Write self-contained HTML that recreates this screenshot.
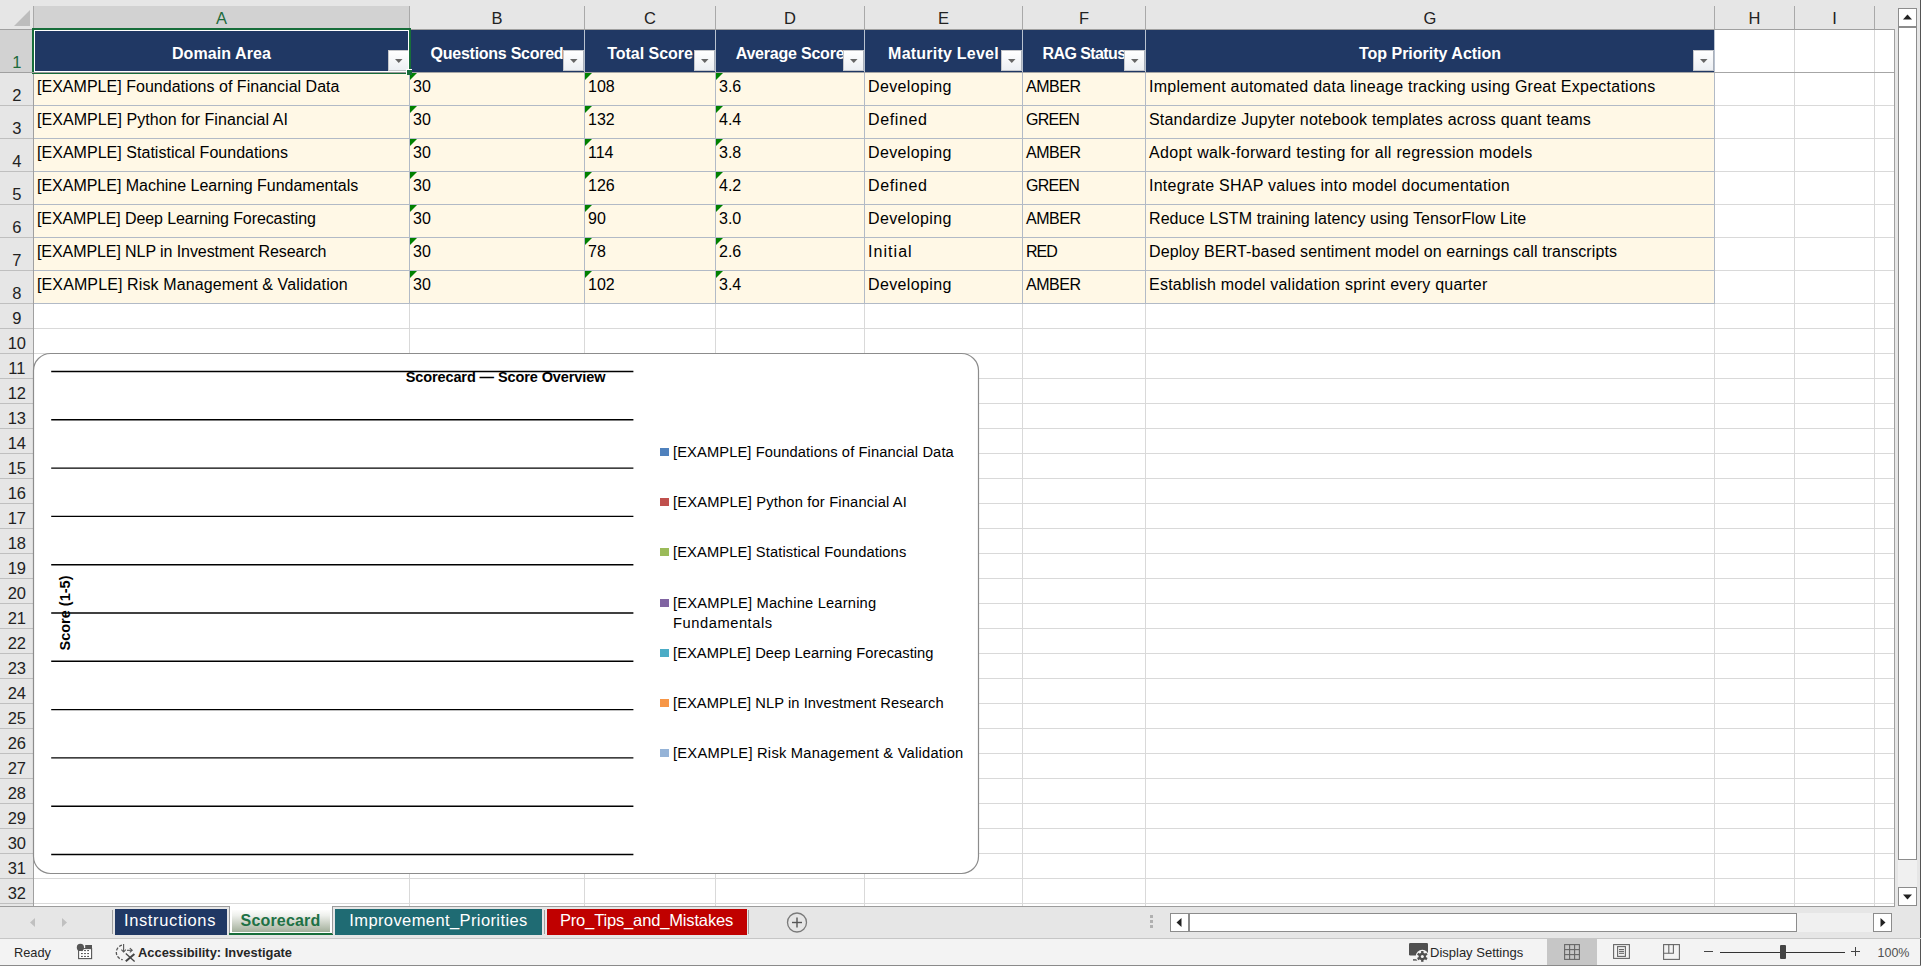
<!DOCTYPE html>
<html><head><meta charset="utf-8"><style>
html,body{margin:0;padding:0;}
body{width:1921px;height:966px;overflow:hidden;position:relative;font-family:"Liberation Sans", sans-serif;}
body div{position:absolute;box-sizing:border-box;}
.t{white-space:pre;line-height:1;}
.dd{width:21px;height:21px;background:linear-gradient(#ffffff,#eceff3);border:1px solid #c4c6ca;border-right-color:#a9afb9;box-sizing:border-box;}
</style></head><body>
<div style="left:0;top:0;width:1921px;height:966px;background:#e6e6e6"></div>
<div style="left:34px;top:30px;width:1860px;height:876px;background:#fff;"></div>
<div style="left:409px;top:30px;width:1px;height:876px;background:#d9d9d9;"></div>
<div style="left:584px;top:30px;width:1px;height:876px;background:#d9d9d9;"></div>
<div style="left:715px;top:30px;width:1px;height:876px;background:#d9d9d9;"></div>
<div style="left:864px;top:30px;width:1px;height:876px;background:#d9d9d9;"></div>
<div style="left:1022px;top:30px;width:1px;height:876px;background:#d9d9d9;"></div>
<div style="left:1145px;top:30px;width:1px;height:876px;background:#d9d9d9;"></div>
<div style="left:1714px;top:30px;width:1px;height:876px;background:#d9d9d9;"></div>
<div style="left:1794px;top:30px;width:1px;height:876px;background:#d9d9d9;"></div>
<div style="left:1874px;top:30px;width:1px;height:876px;background:#d9d9d9;"></div>
<div style="left:34px;top:105px;width:1860px;height:1px;background:#d9d9d9;"></div>
<div style="left:34px;top:138px;width:1860px;height:1px;background:#d9d9d9;"></div>
<div style="left:34px;top:171px;width:1860px;height:1px;background:#d9d9d9;"></div>
<div style="left:34px;top:204px;width:1860px;height:1px;background:#d9d9d9;"></div>
<div style="left:34px;top:237px;width:1860px;height:1px;background:#d9d9d9;"></div>
<div style="left:34px;top:270px;width:1860px;height:1px;background:#d9d9d9;"></div>
<div style="left:34px;top:303px;width:1860px;height:1px;background:#d9d9d9;"></div>
<div style="left:34px;top:328px;width:1860px;height:1px;background:#d9d9d9;"></div>
<div style="left:34px;top:353px;width:1860px;height:1px;background:#d9d9d9;"></div>
<div style="left:34px;top:378px;width:1860px;height:1px;background:#d9d9d9;"></div>
<div style="left:34px;top:403px;width:1860px;height:1px;background:#d9d9d9;"></div>
<div style="left:34px;top:428px;width:1860px;height:1px;background:#d9d9d9;"></div>
<div style="left:34px;top:453px;width:1860px;height:1px;background:#d9d9d9;"></div>
<div style="left:34px;top:478px;width:1860px;height:1px;background:#d9d9d9;"></div>
<div style="left:34px;top:503px;width:1860px;height:1px;background:#d9d9d9;"></div>
<div style="left:34px;top:528px;width:1860px;height:1px;background:#d9d9d9;"></div>
<div style="left:34px;top:553px;width:1860px;height:1px;background:#d9d9d9;"></div>
<div style="left:34px;top:578px;width:1860px;height:1px;background:#d9d9d9;"></div>
<div style="left:34px;top:603px;width:1860px;height:1px;background:#d9d9d9;"></div>
<div style="left:34px;top:628px;width:1860px;height:1px;background:#d9d9d9;"></div>
<div style="left:34px;top:653px;width:1860px;height:1px;background:#d9d9d9;"></div>
<div style="left:34px;top:678px;width:1860px;height:1px;background:#d9d9d9;"></div>
<div style="left:34px;top:703px;width:1860px;height:1px;background:#d9d9d9;"></div>
<div style="left:34px;top:728px;width:1860px;height:1px;background:#d9d9d9;"></div>
<div style="left:34px;top:753px;width:1860px;height:1px;background:#d9d9d9;"></div>
<div style="left:34px;top:778px;width:1860px;height:1px;background:#d9d9d9;"></div>
<div style="left:34px;top:803px;width:1860px;height:1px;background:#d9d9d9;"></div>
<div style="left:34px;top:828px;width:1860px;height:1px;background:#d9d9d9;"></div>
<div style="left:34px;top:853px;width:1860px;height:1px;background:#d9d9d9;"></div>
<div style="left:34px;top:878px;width:1860px;height:1px;background:#d9d9d9;"></div>
<div style="left:34px;top:903px;width:1860px;height:1px;background:#d9d9d9;"></div>
<div style="left:34px;top:73px;width:1680px;height:230px;background:#fff8e6;"></div>
<div style="left:409px;top:72px;width:1px;height:232px;background:#b2bac6;"></div>
<div style="left:584px;top:72px;width:1px;height:232px;background:#b2bac6;"></div>
<div style="left:715px;top:72px;width:1px;height:232px;background:#b2bac6;"></div>
<div style="left:864px;top:72px;width:1px;height:232px;background:#b2bac6;"></div>
<div style="left:1022px;top:72px;width:1px;height:232px;background:#b2bac6;"></div>
<div style="left:1145px;top:72px;width:1px;height:232px;background:#b2bac6;"></div>
<div style="left:1714px;top:72px;width:1px;height:232px;background:#b2bac6;"></div>
<div style="left:34px;top:105px;width:1681px;height:1px;background:#b2bac6;"></div>
<div style="left:34px;top:138px;width:1681px;height:1px;background:#b2bac6;"></div>
<div style="left:34px;top:171px;width:1681px;height:1px;background:#b2bac6;"></div>
<div style="left:34px;top:204px;width:1681px;height:1px;background:#b2bac6;"></div>
<div style="left:34px;top:237px;width:1681px;height:1px;background:#b2bac6;"></div>
<div style="left:34px;top:270px;width:1681px;height:1px;background:#b2bac6;"></div>
<div style="left:34px;top:303px;width:1681px;height:1px;background:#b2bac6;"></div>
<div style="left:34px;top:30px;width:1680px;height:42px;background:#203864;"></div>
<div style="left:409px;top:30px;width:1px;height:42px;background:#b9c2cf;"></div>
<div style="left:584px;top:30px;width:1px;height:42px;background:#b9c2cf;"></div>
<div style="left:715px;top:30px;width:1px;height:42px;background:#b9c2cf;"></div>
<div style="left:864px;top:30px;width:1px;height:42px;background:#b9c2cf;"></div>
<div style="left:1022px;top:30px;width:1px;height:42px;background:#b9c2cf;"></div>
<div style="left:1145px;top:30px;width:1px;height:42px;background:#b9c2cf;"></div>
<div style="left:1714px;top:30px;width:1px;height:42px;background:#b9c2cf;"></div>
<div style="left:34px;top:72px;width:1860px;height:1px;background:#a6a6a6;"></div>
<div style="left:34px;top:6px;width:375px;height:23px;background:#d2d2d2;"></div>
<div style="left:409px;top:6px;width:1px;height:23px;background:#a9a9a9;"></div>
<div style="left:584px;top:6px;width:1px;height:23px;background:#a9a9a9;"></div>
<div style="left:715px;top:6px;width:1px;height:23px;background:#a9a9a9;"></div>
<div style="left:864px;top:6px;width:1px;height:23px;background:#a9a9a9;"></div>
<div style="left:1022px;top:6px;width:1px;height:23px;background:#a9a9a9;"></div>
<div style="left:1145px;top:6px;width:1px;height:23px;background:#a9a9a9;"></div>
<div style="left:1714px;top:6px;width:1px;height:23px;background:#a9a9a9;"></div>
<div style="left:1794px;top:6px;width:1px;height:23px;background:#a9a9a9;"></div>
<div style="left:1874px;top:6px;width:1px;height:23px;background:#a9a9a9;"></div>
<div style="left:33px;top:6px;width:1px;height:23px;background:#a9a9a9;"></div>
<div style="left:0px;top:29px;width:1895px;height:1px;background:#a0a0a0;"></div>
<div class="t" style="top:10.03px;font-size:16.5px;color:#1e6b3c;left:-778.5px;width:2000px;text-align:center;">A</div>
<div class="t" style="top:10.03px;font-size:16.5px;color:#222;left:-503.0px;width:2000px;text-align:center;">B</div>
<div class="t" style="top:10.03px;font-size:16.5px;color:#222;left:-350.0px;width:2000px;text-align:center;">C</div>
<div class="t" style="top:10.03px;font-size:16.5px;color:#222;left:-210.0px;width:2000px;text-align:center;">D</div>
<div class="t" style="top:10.03px;font-size:16.5px;color:#222;left:-56.5px;width:2000px;text-align:center;">E</div>
<div class="t" style="top:10.03px;font-size:16.5px;color:#222;left:84.0px;width:2000px;text-align:center;">F</div>
<div class="t" style="top:10.03px;font-size:16.5px;color:#222;left:430.0px;width:2000px;text-align:center;">G</div>
<div class="t" style="top:10.03px;font-size:16.5px;color:#222;left:754.5px;width:2000px;text-align:center;">H</div>
<div class="t" style="top:10.03px;font-size:16.5px;color:#222;left:834.5px;width:2000px;text-align:center;">I</div>
<svg style="position:absolute;left:0;top:0" width="34" height="30"><polygon points="30,10 30,26 14,26" fill="#bdbdbd"/></svg>
<div style="left:0px;top:30px;width:33px;height:876px;background:#e6e6e6;"></div>
<div style="left:0px;top:30px;width:33px;height:42px;background:#d2d2d2;"></div>
<div style="left:33px;top:29px;width:1px;height:878px;background:#a0a0a0;"></div>
<div style="left:0px;top:72px;width:33px;height:1px;background:#bfbfbf;"></div>
<div style="left:0px;top:105px;width:33px;height:1px;background:#bfbfbf;"></div>
<div style="left:0px;top:138px;width:33px;height:1px;background:#bfbfbf;"></div>
<div style="left:0px;top:171px;width:33px;height:1px;background:#bfbfbf;"></div>
<div style="left:0px;top:204px;width:33px;height:1px;background:#bfbfbf;"></div>
<div style="left:0px;top:237px;width:33px;height:1px;background:#bfbfbf;"></div>
<div style="left:0px;top:270px;width:33px;height:1px;background:#bfbfbf;"></div>
<div style="left:0px;top:303px;width:33px;height:1px;background:#bfbfbf;"></div>
<div style="left:0px;top:328px;width:33px;height:1px;background:#bfbfbf;"></div>
<div style="left:0px;top:353px;width:33px;height:1px;background:#bfbfbf;"></div>
<div style="left:0px;top:378px;width:33px;height:1px;background:#bfbfbf;"></div>
<div style="left:0px;top:403px;width:33px;height:1px;background:#bfbfbf;"></div>
<div style="left:0px;top:428px;width:33px;height:1px;background:#bfbfbf;"></div>
<div style="left:0px;top:453px;width:33px;height:1px;background:#bfbfbf;"></div>
<div style="left:0px;top:478px;width:33px;height:1px;background:#bfbfbf;"></div>
<div style="left:0px;top:503px;width:33px;height:1px;background:#bfbfbf;"></div>
<div style="left:0px;top:528px;width:33px;height:1px;background:#bfbfbf;"></div>
<div style="left:0px;top:553px;width:33px;height:1px;background:#bfbfbf;"></div>
<div style="left:0px;top:578px;width:33px;height:1px;background:#bfbfbf;"></div>
<div style="left:0px;top:603px;width:33px;height:1px;background:#bfbfbf;"></div>
<div style="left:0px;top:628px;width:33px;height:1px;background:#bfbfbf;"></div>
<div style="left:0px;top:653px;width:33px;height:1px;background:#bfbfbf;"></div>
<div style="left:0px;top:678px;width:33px;height:1px;background:#bfbfbf;"></div>
<div style="left:0px;top:703px;width:33px;height:1px;background:#bfbfbf;"></div>
<div style="left:0px;top:728px;width:33px;height:1px;background:#bfbfbf;"></div>
<div style="left:0px;top:753px;width:33px;height:1px;background:#bfbfbf;"></div>
<div style="left:0px;top:778px;width:33px;height:1px;background:#bfbfbf;"></div>
<div style="left:0px;top:803px;width:33px;height:1px;background:#bfbfbf;"></div>
<div style="left:0px;top:828px;width:33px;height:1px;background:#bfbfbf;"></div>
<div style="left:0px;top:853px;width:33px;height:1px;background:#bfbfbf;"></div>
<div style="left:0px;top:878px;width:33px;height:1px;background:#bfbfbf;"></div>
<div style="left:0px;top:903px;width:33px;height:1px;background:#bfbfbf;"></div>
<div style="left:0px;top:906px;width:1895px;height:1px;background:#9c9c9c;"></div>
<div class="t" style="top:53.53px;font-size:16.5px;color:#1e6b3c;left:-983.2px;width:2000px;text-align:center;">1</div>
<div class="t" style="top:86.53px;font-size:16.5px;color:#222;left:-983.2px;width:2000px;text-align:center;">2</div>
<div class="t" style="top:119.53px;font-size:16.5px;color:#222;left:-983.2px;width:2000px;text-align:center;">3</div>
<div class="t" style="top:152.53px;font-size:16.5px;color:#222;left:-983.2px;width:2000px;text-align:center;">4</div>
<div class="t" style="top:185.53px;font-size:16.5px;color:#222;left:-983.2px;width:2000px;text-align:center;">5</div>
<div class="t" style="top:218.53px;font-size:16.5px;color:#222;left:-983.2px;width:2000px;text-align:center;">6</div>
<div class="t" style="top:251.53px;font-size:16.5px;color:#222;left:-983.2px;width:2000px;text-align:center;">7</div>
<div class="t" style="top:284.53px;font-size:16.5px;color:#222;left:-983.2px;width:2000px;text-align:center;">8</div>
<div class="t" style="top:309.53px;font-size:16.5px;color:#222;left:-983.2px;width:2000px;text-align:center;">9</div>
<div class="t" style="top:334.53px;font-size:16.5px;color:#222;left:-983.2px;width:2000px;text-align:center;">10</div>
<div class="t" style="top:359.53px;font-size:16.5px;color:#222;left:-983.2px;width:2000px;text-align:center;">11</div>
<div class="t" style="top:384.53px;font-size:16.5px;color:#222;left:-983.2px;width:2000px;text-align:center;">12</div>
<div class="t" style="top:409.53px;font-size:16.5px;color:#222;left:-983.2px;width:2000px;text-align:center;">13</div>
<div class="t" style="top:434.53px;font-size:16.5px;color:#222;left:-983.2px;width:2000px;text-align:center;">14</div>
<div class="t" style="top:459.53px;font-size:16.5px;color:#222;left:-983.2px;width:2000px;text-align:center;">15</div>
<div class="t" style="top:484.53px;font-size:16.5px;color:#222;left:-983.2px;width:2000px;text-align:center;">16</div>
<div class="t" style="top:509.53px;font-size:16.5px;color:#222;left:-983.2px;width:2000px;text-align:center;">17</div>
<div class="t" style="top:534.53px;font-size:16.5px;color:#222;left:-983.2px;width:2000px;text-align:center;">18</div>
<div class="t" style="top:559.53px;font-size:16.5px;color:#222;left:-983.2px;width:2000px;text-align:center;">19</div>
<div class="t" style="top:584.53px;font-size:16.5px;color:#222;left:-983.2px;width:2000px;text-align:center;">20</div>
<div class="t" style="top:609.53px;font-size:16.5px;color:#222;left:-983.2px;width:2000px;text-align:center;">21</div>
<div class="t" style="top:634.53px;font-size:16.5px;color:#222;left:-983.2px;width:2000px;text-align:center;">22</div>
<div class="t" style="top:659.53px;font-size:16.5px;color:#222;left:-983.2px;width:2000px;text-align:center;">23</div>
<div class="t" style="top:684.53px;font-size:16.5px;color:#222;left:-983.2px;width:2000px;text-align:center;">24</div>
<div class="t" style="top:709.53px;font-size:16.5px;color:#222;left:-983.2px;width:2000px;text-align:center;">25</div>
<div class="t" style="top:734.53px;font-size:16.5px;color:#222;left:-983.2px;width:2000px;text-align:center;">26</div>
<div class="t" style="top:759.53px;font-size:16.5px;color:#222;left:-983.2px;width:2000px;text-align:center;">27</div>
<div class="t" style="top:784.53px;font-size:16.5px;color:#222;left:-983.2px;width:2000px;text-align:center;">28</div>
<div class="t" style="top:809.53px;font-size:16.5px;color:#222;left:-983.2px;width:2000px;text-align:center;">29</div>
<div class="t" style="top:834.53px;font-size:16.5px;color:#222;left:-983.2px;width:2000px;text-align:center;">30</div>
<div class="t" style="top:859.53px;font-size:16.5px;color:#222;left:-983.2px;width:2000px;text-align:center;">31</div>
<div class="t" style="top:884.53px;font-size:16.5px;color:#222;left:-983.2px;width:2000px;text-align:center;">32</div>
<div style="left:1894px;top:29px;width:1px;height:878px;background:#a0a0a0;"></div>
<div class="t" style="top:45.96px;font-size:16px;color:#fff;font-weight:bold;letter-spacing:0.09px;left:-778.5px;width:2000px;text-align:center;">Domain Area</div>
<div class="t" style="top:45.96px;font-size:16px;color:#fff;font-weight:bold;letter-spacing:-0.26px;left:-503.0px;width:2000px;text-align:center;">Questions Scored</div>
<div class="t" style="top:45.96px;font-size:16px;color:#fff;font-weight:bold;letter-spacing:-0.03px;left:-350.0px;width:2000px;text-align:center;">Total Score</div>
<div class="t" style="top:45.96px;font-size:16px;color:#fff;font-weight:bold;letter-spacing:-0.21px;left:-210.0px;width:2000px;text-align:center;">Average Score</div>
<div class="t" style="top:45.96px;font-size:16px;color:#fff;font-weight:bold;letter-spacing:0.23px;left:-56.5px;width:2000px;text-align:center;">Maturity Level</div>
<div class="t" style="top:45.96px;font-size:16px;color:#fff;font-weight:bold;letter-spacing:-0.59px;left:84.0px;width:2000px;text-align:center;">RAG Status</div>
<div class="t" style="top:45.96px;font-size:16px;color:#fff;font-weight:bold;letter-spacing:0px;left:430.0px;width:2000px;text-align:center;">Top Priority Action</div>
<div class="dd" style="left:388px;top:50px"><svg width="21" height="21" style="position:absolute;left:-1px;top:-1px"><polygon points="7,9 14.5,9 10.75,13" fill="#666"/></svg></div>
<div class="dd" style="left:563px;top:50px"><svg width="21" height="21" style="position:absolute;left:-1px;top:-1px"><polygon points="7,9 14.5,9 10.75,13" fill="#666"/></svg></div>
<div class="dd" style="left:694px;top:50px"><svg width="21" height="21" style="position:absolute;left:-1px;top:-1px"><polygon points="7,9 14.5,9 10.75,13" fill="#666"/></svg></div>
<div class="dd" style="left:843px;top:50px"><svg width="21" height="21" style="position:absolute;left:-1px;top:-1px"><polygon points="7,9 14.5,9 10.75,13" fill="#666"/></svg></div>
<div class="dd" style="left:1001px;top:50px"><svg width="21" height="21" style="position:absolute;left:-1px;top:-1px"><polygon points="7,9 14.5,9 10.75,13" fill="#666"/></svg></div>
<div class="dd" style="left:1124px;top:50px"><svg width="21" height="21" style="position:absolute;left:-1px;top:-1px"><polygon points="7,9 14.5,9 10.75,13" fill="#666"/></svg></div>
<div class="dd" style="left:1693px;top:50px"><svg width="21" height="21" style="position:absolute;left:-1px;top:-1px"><polygon points="7,9 14.5,9 10.75,13" fill="#666"/></svg></div>
<div class="t" style="top:79.46px;font-size:16px;color:#000;letter-spacing:0.026px;left:37px;">[EXAMPLE] Foundations of Financial Data</div>
<div class="t" style="top:79.46px;font-size:16px;color:#000;left:413px;">30</div>
<div class="t" style="top:79.46px;font-size:16px;color:#000;left:588px;">108</div>
<div class="t" style="top:79.46px;font-size:16px;color:#000;left:719px;">3.6</div>
<div class="t" style="top:79.46px;font-size:16px;color:#000;letter-spacing:0.367px;left:868px;">Developing</div>
<div class="t" style="top:79.46px;font-size:16px;color:#000;letter-spacing:-0.475px;left:1026px;">AMBER</div>
<div class="t" style="top:79.46px;font-size:16px;color:#000;letter-spacing:0.248px;left:1149px;">Implement automated data lineage tracking using Great Expectations</div>
<svg style="position:absolute;left:410px;top:73px" width="8" height="8"><polygon points="0,0 7,0 0,7" fill="#008000"/></svg>
<svg style="position:absolute;left:585px;top:73px" width="8" height="8"><polygon points="0,0 7,0 0,7" fill="#008000"/></svg>
<svg style="position:absolute;left:716px;top:73px" width="8" height="8"><polygon points="0,0 7,0 0,7" fill="#008000"/></svg>
<div class="t" style="top:112.46px;font-size:16px;color:#000;letter-spacing:0.059px;left:37px;">[EXAMPLE] Python for Financial AI</div>
<div class="t" style="top:112.46px;font-size:16px;color:#000;left:413px;">30</div>
<div class="t" style="top:112.46px;font-size:16px;color:#000;left:588px;">132</div>
<div class="t" style="top:112.46px;font-size:16px;color:#000;left:719px;">4.4</div>
<div class="t" style="top:112.46px;font-size:16px;color:#000;letter-spacing:0.617px;left:868px;">Defined</div>
<div class="t" style="top:112.46px;font-size:16px;color:#000;letter-spacing:-0.75px;left:1026px;">GREEN</div>
<div class="t" style="top:112.46px;font-size:16px;color:#000;letter-spacing:0.202px;left:1149px;">Standardize Jupyter notebook templates across quant teams</div>
<svg style="position:absolute;left:410px;top:106px" width="8" height="8"><polygon points="0,0 7,0 0,7" fill="#008000"/></svg>
<svg style="position:absolute;left:585px;top:106px" width="8" height="8"><polygon points="0,0 7,0 0,7" fill="#008000"/></svg>
<svg style="position:absolute;left:716px;top:106px" width="8" height="8"><polygon points="0,0 7,0 0,7" fill="#008000"/></svg>
<div class="t" style="top:145.46px;font-size:16px;color:#000;letter-spacing:0.034px;left:37px;">[EXAMPLE] Statistical Foundations</div>
<div class="t" style="top:145.46px;font-size:16px;color:#000;left:413px;">30</div>
<div class="t" style="top:145.46px;font-size:16px;color:#000;left:588px;">114</div>
<div class="t" style="top:145.46px;font-size:16px;color:#000;left:719px;">3.8</div>
<div class="t" style="top:145.46px;font-size:16px;color:#000;letter-spacing:0.367px;left:868px;">Developing</div>
<div class="t" style="top:145.46px;font-size:16px;color:#000;letter-spacing:-0.475px;left:1026px;">AMBER</div>
<div class="t" style="top:145.46px;font-size:16px;color:#000;letter-spacing:0.312px;left:1149px;">Adopt walk-forward testing for all regression models</div>
<svg style="position:absolute;left:410px;top:139px" width="8" height="8"><polygon points="0,0 7,0 0,7" fill="#008000"/></svg>
<svg style="position:absolute;left:585px;top:139px" width="8" height="8"><polygon points="0,0 7,0 0,7" fill="#008000"/></svg>
<svg style="position:absolute;left:716px;top:139px" width="8" height="8"><polygon points="0,0 7,0 0,7" fill="#008000"/></svg>
<div class="t" style="top:178.46px;font-size:16px;color:#000;letter-spacing:-0.018px;left:37px;">[EXAMPLE] Machine Learning Fundamentals</div>
<div class="t" style="top:178.46px;font-size:16px;color:#000;left:413px;">30</div>
<div class="t" style="top:178.46px;font-size:16px;color:#000;left:588px;">126</div>
<div class="t" style="top:178.46px;font-size:16px;color:#000;left:719px;">4.2</div>
<div class="t" style="top:178.46px;font-size:16px;color:#000;letter-spacing:0.617px;left:868px;">Defined</div>
<div class="t" style="top:178.46px;font-size:16px;color:#000;letter-spacing:-0.75px;left:1026px;">GREEN</div>
<div class="t" style="top:178.46px;font-size:16px;color:#000;letter-spacing:0.251px;left:1149px;">Integrate SHAP values into model documentation</div>
<svg style="position:absolute;left:410px;top:172px" width="8" height="8"><polygon points="0,0 7,0 0,7" fill="#008000"/></svg>
<svg style="position:absolute;left:585px;top:172px" width="8" height="8"><polygon points="0,0 7,0 0,7" fill="#008000"/></svg>
<svg style="position:absolute;left:716px;top:172px" width="8" height="8"><polygon points="0,0 7,0 0,7" fill="#008000"/></svg>
<div class="t" style="top:211.46px;font-size:16px;color:#000;letter-spacing:-0.091px;left:37px;">[EXAMPLE] Deep Learning Forecasting</div>
<div class="t" style="top:211.46px;font-size:16px;color:#000;left:413px;">30</div>
<div class="t" style="top:211.46px;font-size:16px;color:#000;left:588px;">90</div>
<div class="t" style="top:211.46px;font-size:16px;color:#000;left:719px;">3.0</div>
<div class="t" style="top:211.46px;font-size:16px;color:#000;letter-spacing:0.367px;left:868px;">Developing</div>
<div class="t" style="top:211.46px;font-size:16px;color:#000;letter-spacing:-0.475px;left:1026px;">AMBER</div>
<div class="t" style="top:211.46px;font-size:16px;color:#000;letter-spacing:0.078px;left:1149px;">Reduce LSTM training latency using TensorFlow Lite</div>
<svg style="position:absolute;left:410px;top:205px" width="8" height="8"><polygon points="0,0 7,0 0,7" fill="#008000"/></svg>
<svg style="position:absolute;left:585px;top:205px" width="8" height="8"><polygon points="0,0 7,0 0,7" fill="#008000"/></svg>
<svg style="position:absolute;left:716px;top:205px" width="8" height="8"><polygon points="0,0 7,0 0,7" fill="#008000"/></svg>
<div class="t" style="top:244.46px;font-size:16px;color:#000;letter-spacing:-0.08px;left:37px;">[EXAMPLE] NLP in Investment Research</div>
<div class="t" style="top:244.46px;font-size:16px;color:#000;left:413px;">30</div>
<div class="t" style="top:244.46px;font-size:16px;color:#000;left:588px;">78</div>
<div class="t" style="top:244.46px;font-size:16px;color:#000;left:719px;">2.6</div>
<div class="t" style="top:244.46px;font-size:16px;color:#000;letter-spacing:1.05px;left:868px;">Initial</div>
<div class="t" style="top:244.46px;font-size:16px;color:#000;letter-spacing:-1.0px;left:1026px;">RED</div>
<div class="t" style="top:244.46px;font-size:16px;color:#000;letter-spacing:0.111px;left:1149px;">Deploy BERT-based sentiment model on earnings call transcripts</div>
<svg style="position:absolute;left:410px;top:238px" width="8" height="8"><polygon points="0,0 7,0 0,7" fill="#008000"/></svg>
<svg style="position:absolute;left:585px;top:238px" width="8" height="8"><polygon points="0,0 7,0 0,7" fill="#008000"/></svg>
<svg style="position:absolute;left:716px;top:238px" width="8" height="8"><polygon points="0,0 7,0 0,7" fill="#008000"/></svg>
<div class="t" style="top:277.46px;font-size:16px;color:#000;letter-spacing:0.114px;left:37px;">[EXAMPLE] Risk Management &amp; Validation</div>
<div class="t" style="top:277.46px;font-size:16px;color:#000;left:413px;">30</div>
<div class="t" style="top:277.46px;font-size:16px;color:#000;left:588px;">102</div>
<div class="t" style="top:277.46px;font-size:16px;color:#000;left:719px;">3.4</div>
<div class="t" style="top:277.46px;font-size:16px;color:#000;letter-spacing:0.367px;left:868px;">Developing</div>
<div class="t" style="top:277.46px;font-size:16px;color:#000;letter-spacing:-0.475px;left:1026px;">AMBER</div>
<div class="t" style="top:277.46px;font-size:16px;color:#000;letter-spacing:0.239px;left:1149px;">Establish model validation sprint every quarter</div>
<svg style="position:absolute;left:410px;top:271px" width="8" height="8"><polygon points="0,0 7,0 0,7" fill="#008000"/></svg>
<svg style="position:absolute;left:585px;top:271px" width="8" height="8"><polygon points="0,0 7,0 0,7" fill="#008000"/></svg>
<svg style="position:absolute;left:716px;top:271px" width="8" height="8"><polygon points="0,0 7,0 0,7" fill="#008000"/></svg>
<div style="left:32px;top:28px;width:379px;height:46px;border:2px solid #176d3a;"></div>
<div style="left:34px;top:30px;width:375px;height:1px;background:#fff;"></div>
<div style="left:34px;top:30px;width:1px;height:42px;background:#fff;"></div>
<div style="left:408px;top:30px;width:1px;height:42px;background:#fff;"></div>
<div style="left:34px;top:71px;width:375px;height:1px;background:#fff;"></div>
<div style="left:0px;top:72px;width:34px;height:1px;background:#a0a0a0;"></div>
<div style="left:34px;top:72px;width:375px;height:1px;background:#9a9a9a;"></div>
<div style="left:406px;top:69px;width:6px;height:6px;background:#fff;"></div>
<div style="left:407px;top:70px;width:5px;height:5px;background:#176d3a;"></div>
<svg style="position:absolute;left:0;top:0" width="1921" height="966"><rect x="33.5" y="353.5" width="945" height="520" rx="17" ry="17" fill="#fff" stroke="#8c8c8c" stroke-width="1.2"/><line x1="51.2" y1="371.50" x2="633.4" y2="371.50" stroke="#000" stroke-width="1.4"/><line x1="51.2" y1="419.80" x2="633.4" y2="419.80" stroke="#000" stroke-width="1.4"/><line x1="51.2" y1="468.10" x2="633.4" y2="468.10" stroke="#000" stroke-width="1.4"/><line x1="51.2" y1="516.40" x2="633.4" y2="516.40" stroke="#000" stroke-width="1.4"/><line x1="51.2" y1="564.70" x2="633.4" y2="564.70" stroke="#000" stroke-width="1.4"/><line x1="51.2" y1="613.00" x2="633.4" y2="613.00" stroke="#000" stroke-width="1.4"/><line x1="51.2" y1="661.30" x2="633.4" y2="661.30" stroke="#000" stroke-width="1.4"/><line x1="51.2" y1="709.60" x2="633.4" y2="709.60" stroke="#000" stroke-width="1.4"/><line x1="51.2" y1="757.90" x2="633.4" y2="757.90" stroke="#000" stroke-width="1.4"/><line x1="51.2" y1="806.20" x2="633.4" y2="806.20" stroke="#000" stroke-width="1.4"/><line x1="51.2" y1="854.50" x2="633.4" y2="854.50" stroke="#000" stroke-width="1.4"/></svg>
<div class="t" style="top:370.23px;font-size:14.5px;color:#000;font-weight:bold;letter-spacing:-0.1px;left:-494.5px;width:2000px;text-align:center;">Scorecard — Score Overview</div>
<div class="t" style="left:5px;top:605px;width:120px;height:16px;text-align:center;font-size:14.5px;font-weight:bold;line-height:16px;transform:rotate(-90deg);color:#000">Score (1-5)</div>
<div style="left:660px;top:448px;width:9px;height:8px;background:#4f81bd;"></div>
<div class="t" style="top:444.56px;font-size:14.7px;color:#000;letter-spacing:0.105px;left:673px;">[EXAMPLE] Foundations of Financial Data</div>
<div style="left:660px;top:498px;width:9px;height:8px;background:#c0504d;"></div>
<div class="t" style="top:494.56px;font-size:14.7px;color:#000;letter-spacing:0.166px;left:673px;">[EXAMPLE] Python for Financial AI</div>
<div style="left:660px;top:548px;width:9px;height:8px;background:#9bbb59;"></div>
<div class="t" style="top:544.56px;font-size:14.7px;color:#000;letter-spacing:0.12px;left:673px;">[EXAMPLE] Statistical Foundations</div>
<div style="left:660px;top:599px;width:9px;height:8px;background:#8064a2;"></div>
<div class="t" style="top:595.56px;font-size:14.7px;color:#000;letter-spacing:0.19px;left:673px;">[EXAMPLE] Machine Learning</div>
<div class="t" style="top:615.56px;font-size:14.7px;color:#000;letter-spacing:0.55px;left:673px;">Fundamentals</div>
<div style="left:660px;top:649px;width:9px;height:8px;background:#4bacc6;"></div>
<div class="t" style="top:645.56px;font-size:14.7px;color:#000;letter-spacing:0.05px;left:673px;">[EXAMPLE] Deep Learning Forecasting</div>
<div style="left:660px;top:699px;width:9px;height:8px;background:#f79646;"></div>
<div class="t" style="top:695.56px;font-size:14.7px;color:#000;letter-spacing:0.066px;left:673px;">[EXAMPLE] NLP in Investment Research</div>
<div style="left:660px;top:749px;width:9px;height:8px;background:#95b3d7;"></div>
<div class="t" style="top:745.56px;font-size:14.7px;color:#000;letter-spacing:0.24px;left:673px;">[EXAMPLE] Risk Management &amp; Validation</div>
<div style="left:1898px;top:8px;width:19px;height:19px;background:#fff;box-sizing:border-box;border:1px solid #8c8c8c;"></div>
<svg style="position:absolute;left:1898px;top:8px" width="19" height="19"><polygon points="5,11.5 14,11.5 9.5,6.5" fill="#222"/></svg>
<div style="left:1898px;top:27px;width:19px;height:833px;background:#fff;box-sizing:border-box;border:1px solid #8c8c8c;"></div>
<div style="left:1898px;top:860px;width:19px;height:27px;background:#f0f0f0;"></div>
<div style="left:1898px;top:887px;width:19px;height:19px;background:#fff;box-sizing:border-box;border:1px solid #8c8c8c;"></div>
<svg style="position:absolute;left:1898px;top:887px" width="19" height="19"><polygon points="5,7.5 14,7.5 9.5,12.5" fill="#222"/></svg>
<div style="left:1920px;top:0px;width:1px;height:966px;background:#555;"></div>
<div style="left:0px;top:938px;width:1921px;height:1px;background:#c6c6c6;"></div>
<svg style="position:absolute;left:0;top:907px" width="120" height="31"><polygon points="35,11 35,20 30,15.5" fill="#c0c0c0"/><polygon points="62,11 62,20 67,15.5" fill="#c0c0c0"/></svg>
<div style="left:112px;top:910px;width:1px;height:24px;background:#a0a0a0;"></div>
<div style="left:115px;top:909px;width:112px;height:26px;background:#203864;"></div>
<div class="t" style="top:912.03px;font-size:16.5px;color:#fff;letter-spacing:0.65px;left:-830px;width:2000px;text-align:center;">Instructions</div>
<div style="left:229px;top:906px;width:104px;height:27px;background:#fff;"></div>
<div style="left:229px;top:906px;width:1px;height:28px;background:#9a9a9a;"></div>
<div style="left:232px;top:910px;width:98px;height:22px;background:linear-gradient(#fdfdfc 0%,#eef0ec 25%,#a3af9b 100%)"></div>
<div style="left:229px;top:933px;width:104px;height:2px;background:#176d3a;"></div>
<div class="t" style="top:912.96px;font-size:16px;color:#1e7145;font-weight:bold;letter-spacing:0.18px;left:-719.5px;width:2000px;text-align:center;">Scorecard</div>
<div style="left:332px;top:906px;width:1px;height:28px;background:#9a9a9a;"></div>
<div style="left:335px;top:909px;width:207px;height:26px;background:#1f6b73;"></div>
<div class="t" style="top:912.03px;font-size:16.5px;color:#fff;letter-spacing:0.4px;left:-561.5px;width:2000px;text-align:center;">Improvement_Priorities</div>
<div style="left:544px;top:910px;width:1px;height:24px;background:#a0a0a0;"></div>
<div style="left:547px;top:909px;width:200px;height:26px;background:#c00000;"></div>
<div class="t" style="top:912.03px;font-size:16.5px;color:#fff;letter-spacing:-0.15px;left:-353.5px;width:2000px;text-align:center;">Pro_Tips_and_Mistakes</div>
<div style="left:748px;top:910px;width:1px;height:24px;background:#a0a0a0;"></div>
<svg style="position:absolute;left:785px;top:911px" width="24" height="24"><circle cx="12" cy="11.5" r="9.5" fill="none" stroke="#7a7a7a" stroke-width="1.3"/><line x1="12" y1="6.5" x2="12" y2="16.5" stroke="#555" stroke-width="1.4"/><line x1="7" y1="11.5" x2="17" y2="11.5" stroke="#555" stroke-width="1.4"/></svg>
<div style="left:1150px;top:915px;width:3px;height:3px;background:#b0b0b0;"></div>
<div style="left:1150px;top:920px;width:3px;height:3px;background:#b0b0b0;"></div>
<div style="left:1150px;top:925px;width:3px;height:3px;background:#b0b0b0;"></div>
<div style="left:1170px;top:913px;width:19px;height:19px;background:#fff;box-sizing:border-box;border:1px solid #8c8c8c;"></div>
<svg style="position:absolute;left:1170px;top:913px" width="19" height="19"><polygon points="11.5,5 11.5,14 6.5,9.5" fill="#222"/></svg>
<div style="left:1189px;top:913px;width:608px;height:19px;background:#fff;box-sizing:border-box;border:1px solid #8c8c8c;"></div>
<div style="left:1797px;top:913px;width:76px;height:19px;background:#f0f0f0;"></div>
<div style="left:1873px;top:913px;width:19px;height:19px;background:#fff;box-sizing:border-box;border:1px solid #8c8c8c;"></div>
<svg style="position:absolute;left:1873px;top:913px" width="19" height="19"><polygon points="7.5,5 7.5,14 12.5,9.5" fill="#222"/></svg>
<div style="left:0px;top:939px;width:1920px;height:27px;background:#f3f3f3;"></div>
<div style="left:0px;top:965px;width:1921px;height:1px;background:#8a8a8a;"></div>
<div class="t" style="top:947.16px;font-size:12.8px;color:#262626;left:14px;">Ready</div>
<svg style="position:absolute;left:70px;top:938px" width="68" height="28"><rect x="78.6" y="948.6" width="13" height="10" fill="#fff" stroke="#555" stroke-width="1.1" transform="translate(-70,-938)"/><rect x="15.2" y="7" width="6.8" height="3.6" fill="#555"/><circle cx="10.4" cy="9.4" r="3.6" fill="#555"/><g fill="#555"><rect x="11" y="12" width="1.8" height="1.1"/><rect x="14.1" y="12" width="1.8" height="1.1"/><rect x="17.2" y="12" width="1.8" height="1.1"/><rect x="11" y="15" width="1.8" height="1.1"/><rect x="14.1" y="15" width="1.8" height="1.1"/><rect x="17.2" y="15" width="1.8" height="1.1"/><rect x="11" y="17.9" width="1.8" height="1.1"/><rect x="14.1" y="17.9" width="1.8" height="1.1"/><rect x="17.2" y="17.9" width="1.8" height="1.1"/></g><path d="M51.9 7.2 A7.4 7.4 0 0 0 52.7 21.7" fill="none" stroke="#555" stroke-width="1.3" stroke-dasharray="3 1.6"/><line x1="53.6" y1="6" x2="53.6" y2="13.5" stroke="#555" stroke-width="1.1"/><polyline points="51.4,11.6 53.6,14 55.8,11.6" fill="none" stroke="#555" stroke-width="1.1"/><line x1="57" y1="12.3" x2="62" y2="12.3" stroke="#555" stroke-width="1.1"/><polyline points="59.8,10.2 62.2,12.3 59.8,14.4" fill="none" stroke="#555" stroke-width="1.1"/><line x1="55.8" y1="23.3" x2="64.4" y2="16" stroke="#444" stroke-width="2"/><line x1="55.8" y1="15.6" x2="64.6" y2="23.6" stroke="#444" stroke-width="1.3"/></svg>
<div class="t" style="top:947.08px;font-size:12.9px;color:#262626;font-weight:bold;left:138px;">Accessibility: Investigate</div>
<svg style="position:absolute;left:1400px;top:936px" width="30" height="30"><rect x="9" y="7" width="19" height="12.6" rx="1.3" fill="#505050"/><rect x="13" y="23.2" width="4.5" height="1.4" fill="#505050"/><circle cx="22.3" cy="20.4" r="6.6" fill="#f3f3f3"/><g transform="translate(22.3,20.4)" fill="#505050"><circle r="3.6"/><rect x="-1.2" y="-5.4" width="2.4" height="10.8"/><rect x="-1.2" y="-5.4" width="2.4" height="10.8" transform="rotate(60)"/><rect x="-1.2" y="-5.4" width="2.4" height="10.8" transform="rotate(120)"/></g><circle cx="22.3" cy="20.4" r="1.5" fill="#f3f3f3"/></svg>
<div class="t" style="top:946.00px;font-size:13px;color:#262626;left:1430px;">Display Settings</div>
<div style="left:1547px;top:939px;width:50px;height:26px;background:#c6c6c6;"></div>
<svg style="position:absolute;left:1545px;top:936px" width="150" height="30"><g fill="none" stroke="#666" stroke-width="1.1"><rect x="19.6" y="8.6" width="14.8" height="14.8"/><line x1="24.6" y1="8.6" x2="24.6" y2="23.4"/><line x1="29.6" y1="8.6" x2="29.6" y2="23.4"/><line x1="19.6" y1="13.6" x2="34.4" y2="13.6"/><line x1="19.6" y1="18.6" x2="34.4" y2="18.6"/><rect x="68.6" y="8.6" width="15.8" height="13.8"/><rect x="72.6" y="10.6" width="7.8" height="9.8"/><line x1="74" y1="13.5" x2="79" y2="13.5"/><line x1="74" y1="15.4" x2="79" y2="15.4"/><line x1="74" y1="17.3" x2="79" y2="17.3"/><rect x="118.6" y="8.6" width="15.8" height="14.8"/><polyline points="118.6,17.2 128.4,17.2 128.4,8.6"/><line x1="123.8" y1="8.6" x2="123.8" y2="17.2"/></g></svg>
<div style="left:1704px;top:951px;width:9px;height:1px;background:#444;"></div>
<div style="left:1720px;top:952px;width:125px;height:1px;background:#333;"></div>
<div style="left:1780px;top:945px;width:6px;height:14px;background:#444;border-radius:1px"></div>
<div style="left:1851px;top:951px;width:9px;height:1px;background:#444;"></div>
<div style="left:1855px;top:947px;width:1px;height:9px;background:#444;"></div>
<div class="t" style="top:947.42px;font-size:12.5px;color:#505050;left:1877.5px;">100%</div>
</body></html>
